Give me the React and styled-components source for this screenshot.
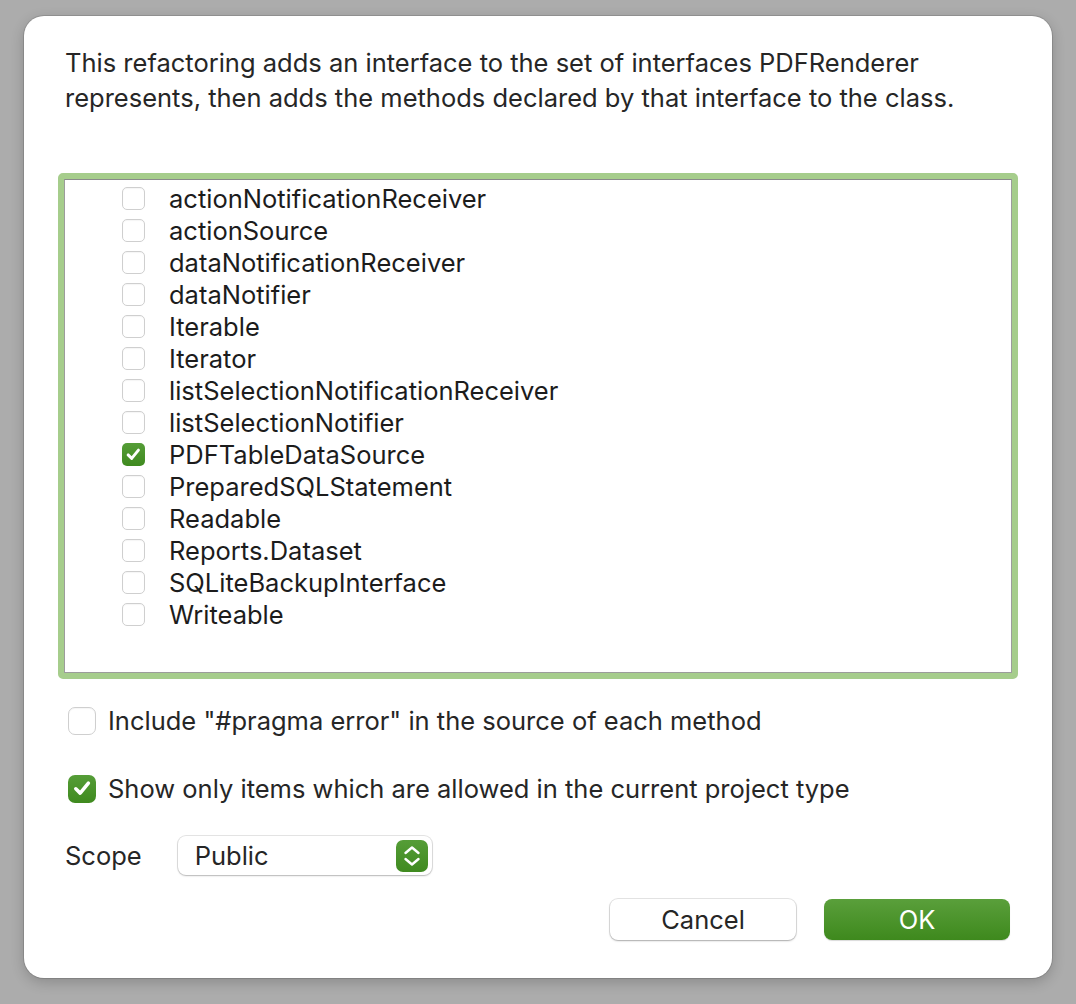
import styled, { createGlobalStyle } from 'styled-components';

const GlobalStyle = createGlobalStyle`
  html, body {
    margin: 0;
    padding: 0;
    background: #acacac;
  }
  body {
    font-family: Inter, "Liberation Sans", sans-serif;
    -webkit-font-smoothing: antialiased;
  }
`;

const Page = styled.div`
  width: 1076px;
  height: 1004px;
  padding: 16px 0 0 24px;
  box-sizing: border-box;
`;

const Dialog = styled.div`
  width: 1028px;
  height: 962px;
  box-sizing: border-box;
  background: #ffffff;
  border-radius: 20px;
  box-shadow: 0 0 0 1px rgba(0, 0, 0, 0.12), 0 4px 14px rgba(0, 0, 0, 0.2);
  padding: 29px 40px 0 34px;
  display: flex;
  flex-direction: column;
  color: #262626;
`;

const Description = styled.p`
  margin: 0 0 0 7px;
  font-size: 25.5px;
  line-height: 35px;
  color: #262626;
`;

const ListRing = styled.div`
  margin-top: 58px;
  width: 960px;
  height: 506px;
  box-sizing: border-box;
  border: 6px solid #a6cd8c;
  border-radius: 5px;
`;

const ListBox = styled.div`
  height: 100%;
  box-sizing: border-box;
  border: 1px solid #9c9c9c;
  border-top-color: #8a8a8a;
  background: #ffffff;
  padding-top: 2px;
`;

const Row = styled.div`
  display: flex;
  align-items: center;
  height: 32px;
  padding-left: 57px;
  gap: 24px;
  font-size: 25.5px;
  color: #1c1c1c;
`;

const Box = styled.span`
  flex: none;
  width: ${(p) => p.$size}px;
  height: ${(p) => p.$size}px;
  box-sizing: border-box;
  border-radius: ${(p) => (p.$size > 24 ? 7 : 5)}px;
  display: flex;
  align-items: center;
  justify-content: center;
  ${(p) =>
    p.$checked
      ? `
    background: linear-gradient(#559d37, #3f8a1f);
    border: none;
  `
      : `
    background: #ffffff;
    border: 1px solid #cfcfcf;
    box-shadow: inset 0 1px 1px rgba(0,0,0,0.04);
  `}
`;

const Option = styled.label`
  display: flex;
  align-items: center;
  gap: 12px;
  font-size: 25.5px;
  color: #262626;
  margin-left: 10px;
  margin-top: ${(p) => p.$top}px;
`;

const ScopeRow = styled.div`
  display: flex;
  align-items: center;
  margin: 32px 0 0 7px;
  gap: 36px;
  font-size: 25.5px;
`;

const Popup = styled.div`
  width: 254px;
  height: 39px;
  box-sizing: border-box;
  border-radius: 8px;
  background: #ffffff;
  box-shadow: 0 0 0 1px rgba(0, 0, 0, 0.1), 0 1px 2px rgba(0, 0, 0, 0.2);
  display: flex;
  align-items: center;
  justify-content: space-between;
  padding: 0 4px 0 17px;
  font-size: 25.5px;
  color: #262626;
`;

const Stepper = styled.span`
  width: 32px;
  height: 32px;
  border-radius: 7px;
  background: linear-gradient(#559d37, #3f8a1f);
  display: flex;
  align-items: center;
  justify-content: center;
`;

const Buttons = styled.div`
  display: flex;
  justify-content: flex-end;
  gap: 28px;
  margin-top: 24px;
  margin-right: 2px;
`;

const Button = styled.button`
  width: 186px;
  height: 41px;
  border-radius: 8px;
  font-family: inherit;
  font-size: 25.5px;
  cursor: pointer;
  ${(p) =>
    p.$primary
      ? `
    border: none;
    color: #ffffff;
    background: linear-gradient(#5a9f3b, #3e891d);
    box-shadow: 0 1px 1px rgba(0,0,0,0.15);
  `
      : `
    border: none;
    color: #262626;
    background: #ffffff;
    box-shadow: 0 0 0 1px rgba(0,0,0,0.1), 0 1px 2px rgba(0,0,0,0.25);
  `}
`;

function Check({ size }) {
  return (
    <svg width={size * 0.72} height={size * 0.72} viewBox="0 0 16 16">
      <path
        d="M3 8.6 L6.5 12 L13 4"
        fill="none"
        stroke="#ffffff"
        strokeWidth="2.8"
        strokeLinecap="round"
        strokeLinejoin="round"
      />
    </svg>
  );
}

function CheckBox({ checked, size = 23 }) {
  return <Box $checked={checked} $size={size}>{checked && <Check size={size} />}</Box>;
}

const interfaces = [
  'actionNotificationReceiver',
  'actionSource',
  'dataNotificationReceiver',
  'dataNotifier',
  'Iterable',
  'Iterator',
  'listSelectionNotificationReceiver',
  'listSelectionNotifier',
  'PDFTableDataSource',
  'PreparedSQLStatement',
  'Readable',
  'Reports.Dataset',
  'SQLiteBackupInterface',
  'Writeable',
];

export default function App() {
  return (
    <>
      <GlobalStyle />
      <Page>
        <Dialog>
          <Description>
            This refactoring adds an interface to the set of interfaces PDFRenderer
            <br />
            represents, then adds the methods declared by that interface to the class.
          </Description>

          <ListRing>
            <ListBox>
              {interfaces.map((name) => (
                <Row key={name}>
                  <CheckBox checked={name === 'PDFTableDataSource'} />
                  {name}
                </Row>
              ))}
            </ListBox>
          </ListRing>

          <Option $top={26}>
            <CheckBox size={28} />
            Include "#pragma error" in the source of each method
          </Option>
          <Option $top={37}>
            <CheckBox size={28} checked />
            Show only items which are allowed in the current project type
          </Option>

          <ScopeRow>
            Scope
            <Popup>
              Public
              <Stepper>
                <svg width="18" height="24" viewBox="0 0 18 24">
                  <path
                    d="M2.5 9 L9 3.5 L15.5 9 M2.5 15 L9 20.5 L15.5 15"
                    fill="none"
                    stroke="#ffffff"
                    strokeWidth="2.4"
                    strokeLinecap="round"
                    strokeLinejoin="round"
                  />
                </svg>
              </Stepper>
            </Popup>
          </ScopeRow>

          <Buttons>
            <Button>Cancel</Button>
            <Button $primary>OK</Button>
          </Buttons>
        </Dialog>
      </Page>
    </>
  );
}
